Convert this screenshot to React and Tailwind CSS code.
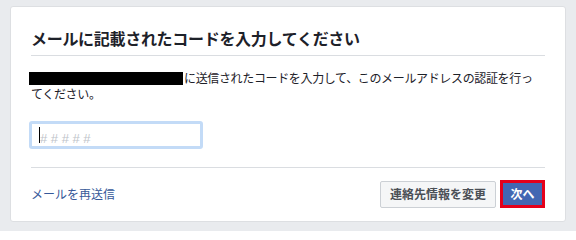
export default function App() {
  const font = { fontFamily: '"Noto Sans CJK JP", "Noto Sans", sans-serif' };

  return (
    <div
      className="h-[231px] w-[576px] bg-[#e9ebee] px-[10px] pt-[6px]"
      style={font}
    >
      <div className="h-[216px] rounded-[3px] border border-[#dddfe2] bg-white px-5">
        {/* Header */}
        <div className="border-b border-[#dadde1] pt-[21px] pb-[7px]">
          <h1 className="text-[16px] leading-[20px] font-bold tracking-[-0.3px] text-[#1d2129]">
            メールに記載されたコードを入力してください
          </h1>
        </div>

        {/* Body */}
        <div className="border-b border-[#dadde1] pt-[14px] pb-[18px]">
          <p className="text-[12px] leading-[16px] tracking-[-0.35px] text-[#1d2129]">
            <span className="-ml-[2px] mr-px inline-block h-[13px] w-[154px] bg-black align-[-2px]" />
            に送信されたコードを入力して、このメールアドレスの認証を行っ
            <br />
            てください。
          </p>

          <div className="relative mt-[19px] h-[28px] w-[174px] -ml-[2px] rounded-[3px] border-[3px] border-[#c3dbf7] bg-white">
            <input
              className="h-full w-full bg-transparent pl-[8px] text-[13px] text-[#1d2129] outline-none placeholder:text-[#bec3c9]"
              placeholder="# # # # #"
              style={{ fontFamily: '"Liberation Sans", Arial, sans-serif' }}
            />
            <span className="absolute top-[3px] left-[7px] h-[16px] w-px bg-black" />
          </div>
        </div>

        {/* Footer */}
        <div className="flex items-center justify-between pt-[12px]">
          <a className="text-[12px] leading-[16px] text-[#365899]">
            メールを再送信
          </a>
          <div className="flex items-center gap-[4px]">
            <button className="h-[27px] w-[116px] rounded-[2px] border border-[#ccd0d5] bg-[#f5f6f7] text-[12px] leading-[16px] font-bold text-[#4b4f56]">
              連絡先情報を変更
            </button>
            <button className="h-[28px] w-[45px] border-[3px] border-[#e5001a] bg-[#4267b2] text-[12px] leading-[16px] font-bold text-white">
              次へ
            </button>
          </div>
        </div>
      </div>
    </div>
  );
}
